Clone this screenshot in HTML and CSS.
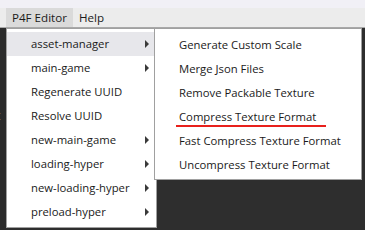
FILE: index.html
```html
<!DOCTYPE html>
<html>
<head>
<meta charset="utf-8">
<link rel="stylesheet" href="styles.css">
</head>
<body>
<div class="chrome"></div>
<div class="menubar">
  <div class="mb-item active">P4F Editor</div>
  <div class="mb-item">Help</div>
</div>
<div class="workspace">
  <div class="edge-left"><span class="ghost">t</span></div>
  <div class="menu main">
    <div class="item hover"><span>asset-manager</span><i class="arrow"></i></div>
    <div class="item"><span>main-game</span><i class="arrow"></i></div>
    <div class="item"><span>Regenerate UUID</span></div>
    <div class="item"><span>Resolve UUID</span></div>
    <div class="item"><span>new-main-game</span><i class="arrow"></i></div>
    <div class="item"><span>loading-hyper</span><i class="arrow"></i></div>
    <div class="item"><span>new-loading-hyper</span><i class="arrow"></i></div>
    <div class="item"><span>preload-hyper</span><i class="arrow"></i></div>
  </div>
  <div class="menu sub">
    <div class="item"><span>Generate Custom Scale</span></div>
    <div class="item"><span>Merge Json Files</span></div>
    <div class="item"><span>Remove Packable Texture</span></div>
    <div class="item marked"><span>Compress Texture Format</span><b class="underline"></b></div>
    <div class="item"><span>Fast Compress Texture Format</span></div>
    <div class="item"><span>Uncompress Texture Format</span></div>
  </div>
</div>
</body>
</html>
```
FILE: styles.css
```css
html, body {
  margin: 0;
  padding: 0;
}
body {
  width: 365px;
  height: 230px;
  overflow: hidden;
  background: #2e2e2e;
  font-family: "Open Sans", "Noto Sans", sans-serif;
  font-size: 11.3px;
  color: #1a1a1a;
}
.chrome {
  height: 8px;
  background: #f1f0f6;
}
.menubar {
  height: 19px;
  background: #ececec;
  display: flex;
  padding-left: 6px;
  border-bottom: 1px solid #a8a8a8;
}
.mb-item {
  padding: 0 6px;
  line-height: 19px;
  font-size: 11.6px;
  white-space: nowrap;
}
.mb-item.active {
  background: #dadada;
  padding: 0 6px 0 6px;
  min-width: 54px;
}
.workspace {
  position: relative;
  height: 202px;
}
.edge-left {
  width: 6px;
  height: 100%;
  background: #2b2b2b;
  position: relative;
  overflow: hidden;
}
.ghost {
  position: absolute;
  left: -4px;
  top: 78px;
  color: #8a8a8a;
  font-size: 13px;
}
.menu {
  position: absolute;
  top: 0;
  background: #ffffff;
  border: 1px solid #a0a0a0;
  box-sizing: border-box;
  padding: 3px 2px 2px 0;
}
.menu.main {
  left: 6px;
  width: 151px;
  height: 200px;
}
.menu.sub {
  left: 154px;
  width: 208px;
  height: 152px;
  padding-top: 4px;
}
.item {
  position: relative;
  height: 24px;
  display: flex;
  align-items: center;
  padding-left: 24px;
  padding-bottom: 1px;
  box-sizing: border-box;
  white-space: nowrap;
}
.item.hover {
  background: #e7e7eb;
}
.arrow {
  position: absolute;
  left: 138px;
  top: 8px;
  width: 0;
  height: 0;
  border-top: 4px solid transparent;
  border-bottom: 4px solid transparent;
  border-left: 4px solid #3a3a3a;
}
.underline {
  position: absolute;
  left: 21px;
  top: 20px;
  width: 150px;
  height: 2px;
  background: #e8201c;
}
```
